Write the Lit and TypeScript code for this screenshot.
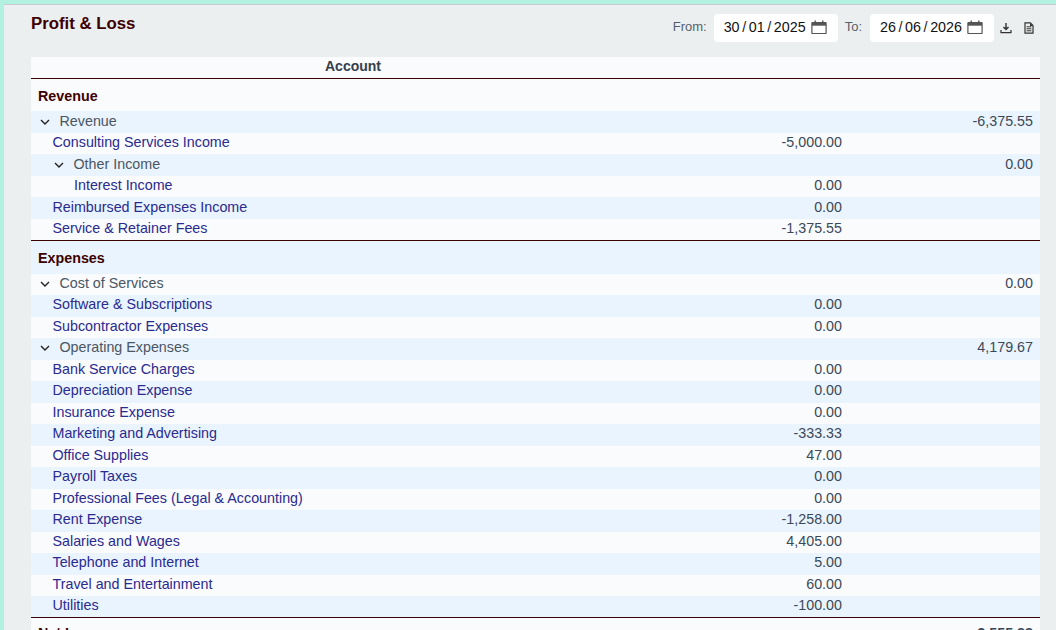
import { LitElement, html, css, svg } from "lit";
import { customElement } from "lit/decorators.js";

type Row = {
  label: string;
  kind?: "section" | "group" | "net";
  indent?: number;
  amount?: string;
  total?: string;
  topLine?: boolean;
};

const rows: Row[] = [
  { label: "Revenue", kind: "section" },
  { label: "Revenue", kind: "group", indent: 0, total: "-6,375.55" },
  { label: "Consulting Services Income", indent: 0, amount: "-5,000.00" },
  { label: "Other Income", kind: "group", indent: 1, total: "0.00" },
  { label: "Interest Income", indent: 1, amount: "0.00" },
  { label: "Reimbursed Expenses Income", indent: 0, amount: "0.00" },
  { label: "Service & Retainer Fees", indent: 0, amount: "-1,375.55" },
  { label: "Expenses", kind: "section", topLine: true },
  { label: "Cost of Services", kind: "group", indent: 0, total: "0.00" },
  { label: "Software & Subscriptions", indent: 0, amount: "0.00" },
  { label: "Subcontractor Expenses", indent: 0, amount: "0.00" },
  { label: "Operating Expenses", kind: "group", indent: 0, total: "4,179.67" },
  { label: "Bank Service Charges", indent: 0, amount: "0.00" },
  { label: "Depreciation Expense", indent: 0, amount: "0.00" },
  { label: "Insurance Expense", indent: 0, amount: "0.00" },
  { label: "Marketing and Advertising", indent: 0, amount: "-333.33" },
  { label: "Office Supplies", indent: 0, amount: "47.00" },
  { label: "Payroll Taxes", indent: 0, amount: "0.00" },
  { label: "Professional Fees (Legal & Accounting)", indent: 0, amount: "0.00" },
  { label: "Rent Expense", indent: 0, amount: "-1,258.00" },
  { label: "Salaries and Wages", indent: 0, amount: "4,405.00" },
  { label: "Telephone and Internet", indent: 0, amount: "5.00" },
  { label: "Travel and Entertainment", indent: 0, amount: "60.00" },
  { label: "Utilities", indent: 0, amount: "-100.00" },
  { label: "Net Income", kind: "net", total: "2,555.88", topLine: true },
];

const calendar = svg`<path d="M1.500 3.500h13a.6.6 0 0 1 .6.6v9.800a.6.6 0 0 1-.6.6h-13a.6.6 0 0 1-.6-.6V4.100a.6.6 0 0 1 .6-.6z" fill="none" stroke="#555" stroke-width="1.200"/><path d="M1 3.500h14v3.200H1z" fill="#555"/><path d="M4.200 1.400v2.400M11.800 1.400v2.400" stroke="#555" stroke-width="1.400"/>`;

@customElement("app-root")
export class AppRoot extends LitElement {
  static styles = css`
    :host {
      display: block;
      height: 630px;
      overflow: hidden;
      box-sizing: border-box;
      padding: 4px 0 0 4px;
      background: #b2f0df;
      font-family: "Liberation Sans", Arial, sans-serif;
      font-size: 14.3px;
      color: #3c4858;
    }
    .page {
      height: 626px;
      box-sizing: border-box;
      border-top: 1px solid #c9cccc;
      background: #ecefef;
      padding: 0 16px 0 27px;
      overflow: hidden;
    }
    .head {
      display: flex;
      align-items: flex-start;
      justify-content: space-between;
      height: 52px;
    }
    h1 {
      margin: 9px 0 0;
      font-size: 16.8px;
      line-height: 20px;
      font-weight: 700;
      color: #3d0000;
    }
    .filters {
      display: flex;
      align-items: center;
      height: 28px;
      margin-top: 9px;
      padding-right: 6px;
    }
    .filters label {
      font-size: 13px;
      color: #555f6b;
      margin: -3px 7px 0 1px;
    }
    .filters label.to {
      margin-right: 8px;
    }
    .date {
      display: flex;
      align-items: center;
      box-sizing: border-box;
      width: 124px;
      height: 28px;
      padding: 0 0 2px 10px;
      border-radius: 4px;
      background: #fff;
      color: #111;
      margin-right: 6px;
    }
    .date i {
      font-style: normal;
      margin: 0 2.6px;
      color: #222;
    }
    .date svg {
      margin-left: 5px;
    }
    .action {
      display: block;
      flex: none;
    }
    .action.doc {
      margin-left: 12px;
    }
    .table {
      width: 1009px;
    }
    .row {
      display: grid;
      grid-template-columns: 644px 174px 191px;
      height: 21.5px;
      line-height: 18px;
      background: #f9fbfd;
    }
    .row.odd {
      background: #e9f4fe;
    }
    .row.line {
      border-top: 1px solid #3d0000;
    }
    .row > div {
      padding: 0.05px 7px 0;
      min-width: 0;
      white-space: nowrap;
    }
    .num {
      text-align: right;
      color: #3c4858;
    }
    .top {
      height: 21px;
      line-height: 18px;
      border-bottom: 1px solid #3d0000;
      font-size: 14px;
      font-weight: 700;
      color: #36404c;
    }
    .top .name {
      text-align: center;
    }
    .section {
      height: 32.48px;
      line-height: 34px;
      font-weight: 700;
      color: #3d0000;
    }
    .section.line {
      margin-top: -0.4px;
      height: 32.82px;
    }
    .net {
      height: 32px;
      line-height: 31px;
      font-weight: 700;
      color: #3d0000;
    }
    .net.line {
      margin-top: -1px;
    }
    .link {
      color: #2a2a8f;
    }
    .link .name {
      padding-left: 21.5px;
    }
    .link.deep .name {
      padding-left: 43px;
    }
    .group .name {
      display: flex;
      align-items: flex-start;
      padding-left: 9px;
      color: #4b5563;
    }
    .group.deep .name {
      padding-left: 23px;
    }
    .group svg {
      flex: none;
      margin: 5px 9.5px 0 0;
    }
  `;

  private date(d: string, m: string, y: string) {
    return html`<div class="date">
      <span>${d}</span><i>/</i><span>${m}</span><i>/</i><span>${y}</span>
      <svg width="16" height="16" viewBox="0 0 16 16">${calendar}</svg>
    </div>`;
  }

  private row(r: Row, i: number) {
    const odd = i % 2 === 1 ? " odd" : "";
    const line = r.topLine ? " line" : "";
    if (r.kind === "section" || r.kind === "net") {
      return html`<div class="row ${r.kind}${odd}${line}">
        <div class="name">${r.label}</div>
        <div></div>
        <div class="num">${r.total}</div>
      </div>`;
    }
    if (r.kind === "group") {
      return html`<div class="row group${r.indent ? " deep" : ""}${odd}">
        <div class="name">
          <svg width="10" height="10" viewBox="0 0 10 10">
            <path d="M1 3l4 4 4-4" fill="none" stroke="#222" stroke-width="1.400" />
          </svg>
          ${r.label}
        </div>
        <div></div>
        <div class="num">${r.total}</div>
      </div>`;
    }
    return html`<div class="row link${r.indent ? " deep" : ""}${odd}">
      <div class="name">${r.label}</div>
      <div class="num">${r.amount}</div>
      <div></div>
    </div>`;
  }

  render() {
    return html`<div class="page">
      <div class="head">
        <h1>Profit &amp; Loss</h1>
        <div class="filters">
          <label>From:</label>
          ${this.date("30", "01", "2025")}
          <label class="to">To:</label>
          ${this.date("26", "06", "2026")}
          <svg class="action" width="12" height="12" viewBox="0 0 12 12">
            <path d="M6 1v6.200M3.500 5 6 7.600 8.500 5" fill="none" stroke="#333" stroke-width="1.400" />
            <path d="M1 8v2.600h10V8" fill="none" stroke="#333" stroke-width="1.200" />
          </svg>
          <svg class="action doc" width="10" height="12" viewBox="0 0 10 12">
            <path d="M1 .8h5.400L9 3.400v7.800H1z" fill="none" stroke="#333" stroke-width="1.200" />
            <path d="M2.600 4.800h4.800M2.600 6.800h4.800M2.600 8.800h4.800" stroke="#333" stroke-width="1" />
            <path d="M6 1v3h3z" fill="#333" />
          </svg>
        </div>
      </div>
      <div class="table">
        <div class="row top">
          <div class="name">Account</div>
          <div></div>
          <div></div>
        </div>
        ${rows.map((r, i) => this.row(r, i))}
      </div>
    </div>`;
  }
}
